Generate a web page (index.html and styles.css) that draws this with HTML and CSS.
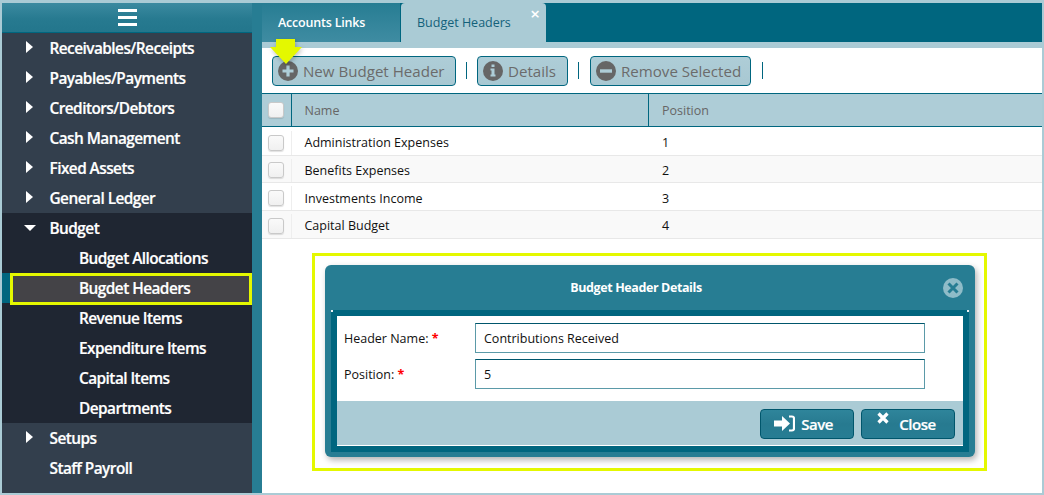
FILE: index.html
```html
<!DOCTYPE html>
<html lang="en">
<head>
<meta charset="utf-8">
<title>Budget Headers</title>
<link rel="stylesheet" href="styles.css">
</head>
<body>
<div class="app">
  <aside class="sidebar">
    <div class="burger"><svg width="19" height="17" viewBox="0 0 19 17"><path d="M0 1.500h19M0 8.500h19M0 15.500h19" stroke="#fff" stroke-width="3"/></svg></div>
    <nav class="menu">
      <div class="item"><span class="caret right"></span>Receivables/Receipts</div>
      <div class="item"><span class="caret right"></span>Payables/Payments</div>
      <div class="item"><span class="caret right"></span>Creditors/Debtors</div>
      <div class="item"><span class="caret right"></span>Cash Management</div>
      <div class="item"><span class="caret right"></span>Fixed Assets</div>
      <div class="item"><span class="caret right"></span>General Ledger</div>
      <div class="group">
        <div class="item"><span class="caret down"></span>Budget</div>
        <div class="item sub">Budget Allocations</div>
        <div class="item sub selected">Bugdet Headers</div>
        <div class="item sub">Revenue Items</div>
        <div class="item sub">Expenditure Items</div>
        <div class="item sub">Capital Items</div>
        <div class="item sub">Departments</div>
      </div>
      <div class="item"><span class="caret right"></span>Setups</div>
      <div class="item"><span class="caret none"></span>Staff Payroll</div>
    </nav>
  </aside>
  <div class="strip"></div>
  <main class="main">
    <div class="tabs">
      <div class="tab inactive">Accounts Links</div>
      <div class="tab active">Budget Headers<span class="tab-x">×</span></div>
    </div>
    <div class="toolbar">
      <div class="arrow"></div>
      <button class="tbtn new"><svg class="ic" width="20" height="20" viewBox="0 0 20 20"><circle cx="10" cy="10" r="10" fill="#666"/><path d="M10 4.500v11M4.500 10h11" stroke="#aecdd7" stroke-width="3.200"/></svg>New Budget Header</button>
      <span class="sep"></span>
      <button class="tbtn det"><svg class="ic" width="20" height="20" viewBox="0 0 20 20"><circle cx="10" cy="10" r="10" fill="#666"/><path d="M8.500 3.500h3v2.500h-3zM7.500 7.500h4v6h1v2h-5v-2h1v-4h-1z" fill="#aecdd7"/></svg>Details</button>
      <span class="sep"></span>
      <button class="tbtn rem"><svg class="ic" width="20" height="20" viewBox="0 0 20 20"><circle cx="10" cy="10" r="10" fill="#666"/><path d="M4 8.300h12v3.400H4z" fill="#aecdd7"/></svg>Remove Selected</button>
      <span class="sep"></span>
    </div>
    <div class="thead">
      <div class="c-check"><span class="check"></span></div>
      <div class="c-name">Name</div>
      <div class="c-pos">Position</div>
    </div>
    <div class="rows">
      <div class="row"><div class="c-check"><span class="check"></span></div><div class="c-name">Administration Expenses</div><div class="c-pos">1</div></div>
      <div class="row alt"><div class="c-check"><span class="check"></span></div><div class="c-name">Benefits Expenses</div><div class="c-pos">2</div></div>
      <div class="row"><div class="c-check"><span class="check"></span></div><div class="c-name">Investments Income</div><div class="c-pos">3</div></div>
      <div class="row alt"><div class="c-check"><span class="check"></span></div><div class="c-name">Capital Budget</div><div class="c-pos">4</div></div>
    </div>
    <div class="highlight">
      <section class="dialog">
        <header class="dialog-title">Budget Header Details
          <svg class="dialog-x" width="20" height="20" viewBox="0 0 20 20"><circle cx="10" cy="10" r="10" fill="#8fbcc8"/><path d="M5.500 5.500l9 9M14.500 5.500l-9 9" stroke="#277d93" stroke-width="3"/></svg>
        </header>
        <div class="dialog-inner">
          <div class="form">
            <div class="field"><label>Header Name: <b>*</b></label><div class="input">Contributions Received</div></div>
            <div class="field"><label>Position: <b>*</b></label><div class="input">5</div></div>
          </div>
          <div class="dialog-foot">
            <button class="dbtn save"><svg width="21" height="17" viewBox="0 0 21 17"><path d="M0 5.500h8V1l8 7.500L8 16v-4.500H0z" fill="#fff"/><path d="M15 1.500h3a2 2 0 0 1 2 2v10a2 2 0 0 1-2 2h-3" fill="none" stroke="#fff" stroke-width="2.200"/></svg>Save</button>
            <button class="dbtn close"><svg class="close-ic" width="12" height="12" viewBox="0 0 12 12"><path d="M1.500 1.500l9 9M10.500 1.500l-9 9" stroke="#fff" stroke-width="3.200"/></svg>Close</button>
          </div>
        </div>
      </section>
    </div>
  </main>
</div>
</body>
</html>
```
FILE: styles.css
```css
*, *::before, *::after { box-sizing: border-box; }
html, body { margin: 0; height: 100%; overflow: hidden; }
body {
  background: #aacbd5;
  padding: 3px 2px 3px 2px;
  font-family: "Open Sans", "Liberation Sans", sans-serif;
}
.app { display: flex; height: 490px; overflow: hidden; }

.sidebar { width: 250px; flex: none; overflow: hidden; background: #333f4d; }
.burger {
  height: 30px;
  display: flex; align-items: center; justify-content: center;
  background: linear-gradient(#3b8aa0, #277a90 55%, #23768c);
  border-bottom: 1px solid #00667f;
}
.item {
  position: relative;
  height: 30px;
  display: flex; align-items: center;
  color: #fff;
  font-size: 15.400px;
  font-weight: 600;
  letter-spacing: -0.550px;
  padding: 1px 0 0 23px;
  -webkit-text-stroke: 0.2px #fff;
}
.caret { flex: none; display: block; }
.caret.right { border-left: 7px solid #fff; border-top: 6px solid transparent; border-bottom: 6px solid transparent; height: 12px; width: 7px; margin-right: 16.500px; margin-left: 1px; margin-top: -3px; }
.caret.down { border-top: 6px solid #fff; border-left: 6px solid transparent; border-right: 6px solid transparent; width: 12px; height: 6px; margin-right: 13.500px; margin-left: -1px; margin-top: -2px; }
.caret.none { width: 24.500px; height: 0; }
.group { background: #1f2632; }
.sub { padding-left: 77px; }
.selected { background: #444347; }
.selected::before { content: ""; position: absolute; left: 0; top: 0; bottom: 0; width: 8px; background: #00667f; }
.selected::after { content: ""; position: absolute; left: 8px; right: 0; top: 0; height: 32px; border: 3px solid #e4f800; z-index: 2; }

.strip { width: 10px; flex: none; background: #277d93; }
.main { flex: 1; min-width: 0; background: #fff; position: relative; }

.tabs { height: 39px; background: #00667f; display: flex; }
.tab { height: 39px; display: flex; align-items: center; font-size: 12.500px; position: relative; }
.inactive { width: 139px; padding-left: 16px; color: #fff; font-weight: 600; letter-spacing: -0.200px; background: linear-gradient(#277d93, #3f8ca2); border-right: 1px solid #00667f; }
.active { width: 145px; padding-left: 16px; color: #13617a; background: #aacbd5; border-radius: 4px 4px 0 0; }
.tab-x { position: absolute; right: 6px; top: 1px; color: #fff; font-size: 17px; line-height: 20px; font-weight: 600; }

.toolbar {
  position: relative;
  border-top: 6px solid #aacbd5;
  height: 51px;
  padding: 8px 0 0 10px;
  display: flex; align-items: flex-start;
}
.arrow {
  position: absolute; left: 8px; top: -9px; width: 32px; height: 25px;
  filter: drop-shadow(1px 2px 2px rgba(0,0,0,.25));
  z-index: 2;
}
.arrow::before {
  content: ""; display: block; width: 100%; height: 100%;
  background: #e4f800;
  clip-path: polygon(6px 0, 25px 0, 25px 8px, 32px 8px, 16px 25px, 0 8px, 6px 8px);
}
.tbtn {
  height: 30px;
  display: flex; align-items: center;
  background: linear-gradient(#aecdd7, #a8c8d2);
  border: 1px solid #00667f;
  border-radius: 4px;
  color: #6b6b6b;
  font-family: inherit;
  font-size: 15.100px;
  padding: 0 0 0 5px;
}
.ic { margin-right: 5px; flex: none; }
.new { width: 184px; }
.det { width: 91px; }
.rem { width: 161px; margin: 0 1px; }
.sep { width: 1px; height: 17px; background: #00667f; margin: 6px 10px 0; }

.thead, .row { display: flex; align-items: center; }
.thead {
  height: 34px;
  background: #aecdd7;
  border-top: 1px solid #00667f;
  border-bottom: 1px solid #00667f;
  color: #666;
  font-size: 12.500px;
}
.thead .c-check, .thead .c-name { border-right: 1px solid #00667f; }
.rows { padding-top: 1px; }
.row { height: 27.670px; padding-top: 3px; border-bottom: 1px solid #e8e8e8; color: #111; font-size: 12.500px; }
.alt { background: #f9f9f9; }
.c-check { width: 30px; height: 100%; flex: none; display: flex; align-items: center; justify-content: center; padding-right: 2px; border-right: 1px solid #eee; }
.c-name { width: 357px; flex: none; height: 100%; display: flex; align-items: center; padding-left: 12.500px; }
.c-pos { flex: 1; padding-left: 13px; }
.check {
  width: 16px; height: 16px;
  background: linear-gradient(#fafafa, #f0f0f0);
  border: 1px solid #c9c9c9;
  border-radius: 3px;
  box-shadow: 0 1px 1px rgba(0,0,0,.12);
}

.highlight {
  width: 675px;
  height: 218px;
  margin: 14px 0 0 50px;
  border: 3px solid #e4f800;
  padding: 9px 10px 0;
}
.dialog {
  width: 650px; height: 192px;
  background: #277d93;
  border-radius: 6px;
  padding: 0 6px 5px;
  display: flex; flex-direction: column;
  box-shadow: 2px 3px 6px rgba(0,0,0,.3);
}
.dialog-title {
  height: 45px; flex: none;
  display: flex; align-items: center; justify-content: center;
  position: relative;
  color: #fff; font-size: 12.500px; font-weight: 700;
  letter-spacing: -0.400px;
  padding: 1px 28px 0 0;
}
.dialog-x { position: absolute; right: 6px; top: 13px; }
.dialog-inner {
  flex: 1;
  position: relative;
  border: 6px solid #00667f;
  background: #fff;
  display: flex; flex-direction: column;
}
.dialog-inner::before, .dialog-inner::after {
  content: ""; position: absolute; top: -6px; width: 2px; height: 2px; background: #e8f1f4;
}
.dialog-inner::before { left: -6px; }
.dialog-inner::after { right: -6px; }
.form { height: 85px; padding-top: 7px; }
.field { height: 30px; margin-bottom: 6px; display: flex; align-items: center; }
.field label { width: 138px; padding: 1px 0 0 7px; font-size: 12.500px; color: #111; flex: none; }
.field b { color: #f00; font-weight: 700; }
.input {
  width: 450px; height: 30px;
  display: flex; align-items: center;
  padding: 1px 0 0 8px;
  border: 1px solid #5b9aa8;
  border-top-color: #00566c;
  font-size: 12.500px; color: #111;
}
.dialog-foot {
  height: 45px;
  background: #aacbd5;
  border-bottom: 1px solid #fff;
  flex: none;
  display: flex; justify-content: flex-end; align-items: flex-start;
  gap: 7px;
  padding: 8px 8px 0 0;
}
.dbtn {
  width: 94px; height: 30px;
  display: flex; align-items: center; justify-content: center; gap: 6px;
  background: linear-gradient(#2f859b, #277a90 50%, #277d93);
  border: 1px solid #00566c;
  border-radius: 4px;
  color: #fff;
  font-family: inherit; font-size: 15px; font-weight: 600;
  letter-spacing: -0.500px;
  -webkit-text-stroke: 0.2px #fff;
  padding: 0;
}
.save { padding-right: 7px; }
.close { padding-right: 3px; }
.close-ic { margin-top: -12px; margin-right: 4px; }
```
